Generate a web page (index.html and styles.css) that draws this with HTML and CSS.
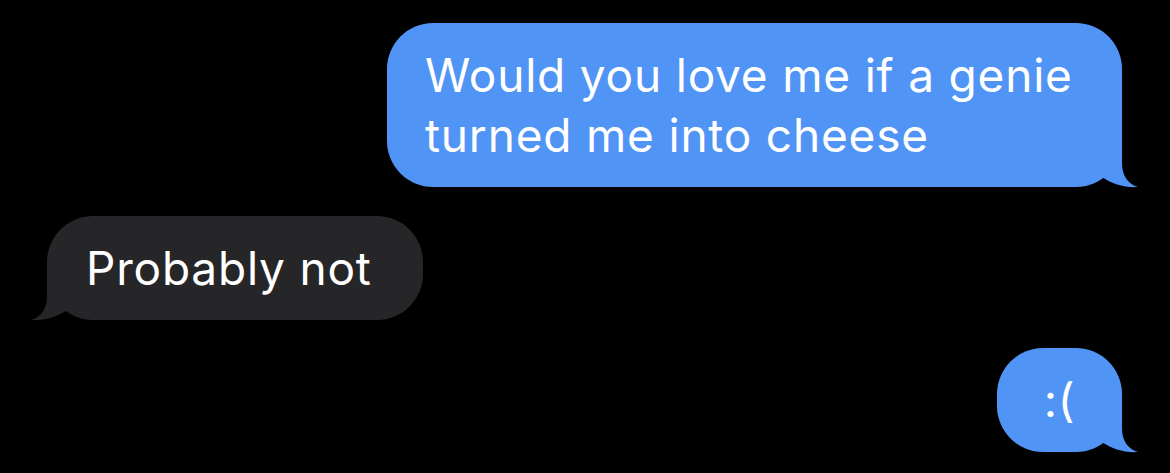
FILE: index.html
```html
<!DOCTYPE html>
<html lang="en">
<head>
<meta charset="utf-8">
<title>Messages</title>
<link rel="stylesheet" href="styles.css">
</head>
<body>
<main class="thread">
  <div class="bubble sent wide">
    Would you love me if a genie turned me into cheese
    <svg class="tail" viewBox="0 0 62 50" aria-hidden="true"><path d="M44 0 L44 25 C44 38 50 46 60 49 C47 50 34 46 24 39 L2 10 Z"/></svg>
  </div>
  <div class="bubble received">
    Probably not
    <svg class="tail" viewBox="0 0 62 50" aria-hidden="true"><path d="M44 0 L44 25 C44 38 50 46 60 49 C47 50 34 46 24 39 L2 10 Z"/></svg>
  </div>
  <div class="bubble sent short">
    :(
    <svg class="tail" viewBox="0 0 62 50" aria-hidden="true"><path d="M44 0 L44 25 C44 38 50 46 60 49 C47 50 34 46 24 39 L2 10 Z"/></svg>
  </div>
</main>
</body>
</html>
```
FILE: styles.css
```css
html, body {
  margin: 0;
  background: #000;
}
body {
  width: 1170px;
  height: 473px;
  overflow: hidden;
}
.thread {
  display: flex;
  flex-direction: column;
  gap: 29px;
  padding: 23px 48px 0 47px;
  font-family: Inter, "Liberation Sans", sans-serif;
  font-size: 46px;
  line-height: 60px;
  letter-spacing: 0.8px;
  color: #fff;
}
.bubble {
  position: relative;
  box-sizing: border-box;
  padding: 22px 51px 22px 39px;
  border-radius: 46px;
}
.sent {
  align-self: flex-end;
  background: #5094f5;
  color: #fff;
}
.sent .tail {
  fill: #5094f5;
  right: -18px;
}
.received {
  align-self: flex-start;
  background: #262629;
  color: #fff;
}
.received .tail {
  fill: #262629;
  left: -18px;
  transform: scaleX(-1);
}
.tail {
  position: absolute;
  bottom: -1px;
  width: 62px;
  height: 50px;
}
.wide {
  width: 735px;
  padding-left: 38px;
  padding-right: 38px;
}
.short {
  min-width: 125px;
  padding-left: 38px;
  padding-right: 38px;
  text-align: center;
  margin-top: -1px;
}
```
